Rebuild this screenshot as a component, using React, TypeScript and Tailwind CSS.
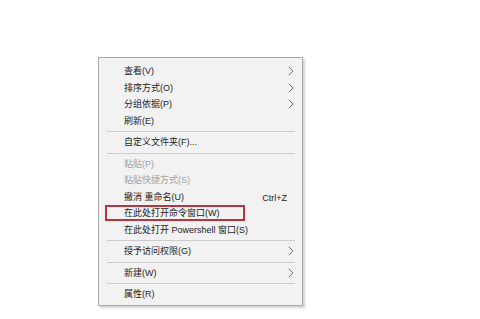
import React from "react";

type Item =
  | { type: "sep" }
  | { type: "item"; label: string; arrow?: boolean; disabled?: boolean; shortcut?: string; boxed?: boolean };

const items: Item[] = [
  { type: "item", label: "查看(V)", arrow: true },
  { type: "item", label: "排序方式(O)", arrow: true },
  { type: "item", label: "分组依据(P)", arrow: true },
  { type: "item", label: "刷新(E)" },
  { type: "sep" },
  { type: "item", label: "自定义文件夹(F)..." },
  { type: "sep" },
  { type: "item", label: "粘贴(P)", disabled: true },
  { type: "item", label: "粘贴快捷方式(S)", disabled: true },
  { type: "item", label: "撤消 重命名(U)", shortcut: "Ctrl+Z" },
  { type: "item", label: "在此处打开命令窗口(W)", boxed: true },
  { type: "item", label: "在此处打开 Powershell 窗口(S)" },
  { type: "sep" },
  { type: "item", label: "授予访问权限(G)", arrow: true },
  { type: "sep" },
  { type: "item", label: "新建(W)", arrow: true },
  { type: "sep" },
  { type: "item", label: "属性(R)" },
];

function Chevron() {
  return (
    <svg width="6" height="10" viewBox="0 0 6 10" className="absolute right-[8px] top-[3px]">
      <path d="M0.8 0.8 L5 5 L0.8 9.2" fill="none" stroke="#707070" strokeWidth="1" />
    </svg>
  );
}

export default function App() {
  return (
    <div
      className="w-[480px] h-[319px] bg-white overflow-hidden pt-[57px] pl-[98px]"
      style={{ fontFamily: '"Liberation Sans", "Noto Sans CJK SC", sans-serif' }}
    >
      <div className="w-[205px] h-[249px] bg-[#f2f2f2] border border-[#a8a8a8] shadow-[2px_2px_2px_rgba(0,0,0,0.18)] pt-[5px] flex flex-col overflow-hidden">
        {items.map((it, i) =>
          it.type === "sep" ? (
            <div key={i} className="h-[5px] shrink-0 flex items-center pl-[8px] pr-[7px]">
              <div className="h-px w-full bg-[#cdcdcd]" />
            </div>
          ) : (
            <div
              key={i}
              className={`relative shrink-0 h-[16.5px] flex items-center pt-[1px] pl-[25px] text-[9px] leading-none ${
                it.disabled ? "text-[#a2a2a2]" : "text-[#1c1c1c]"
              }`}
            >
              <span className="whitespace-pre">{it.label}</span>
              {it.shortcut && (
                <span className="absolute right-[15px] top-[5px] text-[9px]">{it.shortcut}</span>
              )}
              {it.arrow && <Chevron />}
              {it.boxed && (
                <div className="absolute left-[6px] top-0 w-[140px] h-[16px] border-2 border-[#b73440]" />
              )}
            </div>
          )
        )}
      </div>
    </div>
  );
}
